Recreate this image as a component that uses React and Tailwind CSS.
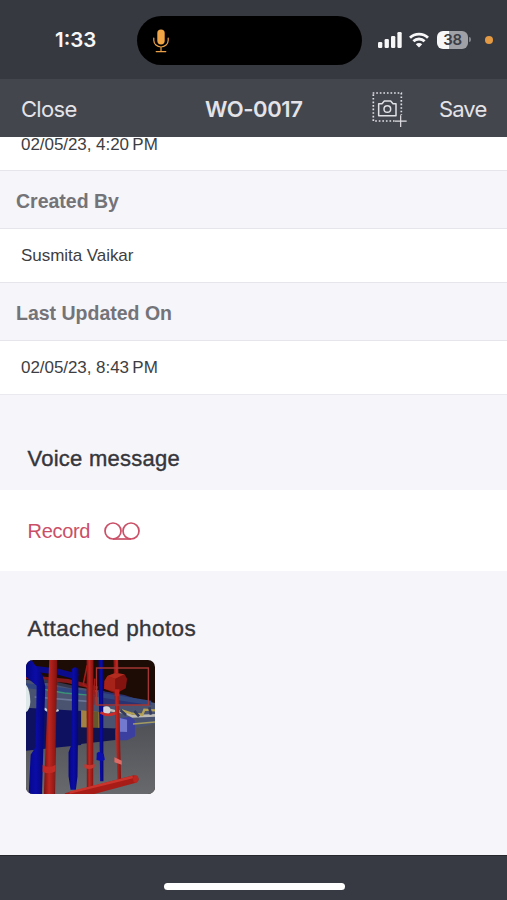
const CreatedOn = '02/05/23, 4:20\u2009PM';
const UpdatedOn = '02/05/23, 8:43\u2009PM';

function MicIcon() {
  return (
    <svg className="ml-4 h-6 w-4" viewBox="0 0 16 24" fill="none" stroke="#e9a048" strokeWidth="1.2" strokeLinecap="round">
      <rect x="4.3" y="0.4" width="7.4" height="15" rx="3.7" fill="#f2a544" stroke="none" />
      <path d="M0.8 9v2.2a7.2 6.8 0 0 0 14.4 0V9M8 18v4.4M3.2 22.6h9.6" />
    </svg>
  );
}

function SignalIcon() {
  return (
    <svg className="h-4 w-6" viewBox="0 0 24 16" fill="#f7f7f8">
      <rect x="0" y="10" width="4.3" height="6" rx="1.2" />
      <rect x="6.6" y="7" width="4.3" height="9" rx="1.2" />
      <rect x="13" y="4" width="4.3" height="12" rx="1.2" />
      <rect x="19.4" y="0" width="4.3" height="16" rx="1.2" />
    </svg>
  );
}

function WifiIcon() {
  return (
    <svg className="ml-[7px] h-4 w-5" viewBox="0 0 20 16" fill="none" stroke="#f7f7f8" strokeWidth="2.8">
      <path d="M1 5.7a13 13 0 0 1 18 0M4.4 9.3a8 8 0 0 1 11.2 0" />
      <path d="M10 15.6 6.8 12.3a4.6 4.6 0 0 1 6.4 0Z" fill="#f7f7f8" stroke="none" />
    </svg>
  );
}

function Battery() {
  return (
    <div className="ml-2 flex items-center">
      <div className="flex h-[18px] w-[31px] items-center justify-center rounded-[6px] bg-linear-to-r from-[#f7f7f8] from-38% to-[#a0a1a6] to-38% text-[15px] font-semibold leading-[18px] tracking-[-0.3px] text-[#3b3d45]">
        38
      </div>
      <div className="ml-px h-[5px] w-[2px] rounded-r-full bg-[#83858b]" />
    </div>
  );
}

function AddPhotoIcon() {
  return (
    <svg className="h-[37px] w-9" viewBox="36 210 108 111" fill="none" stroke="#e0e1e5">
      <path d="M38 216H124V282M40 220V300H104" strokeWidth="5" strokeDasharray="5 5.7" />
      <path d="M56 248H66L73 240H92L99 248H108V284H56Z" strokeWidth="4.5" strokeLinejoin="round" />
      <circle cx="82" cy="264" r="10" strokeWidth="4.5" />
      <path d="M122 283V318M105 300.500H140" strokeWidth="3.600" />
    </svg>
  );
}

function RecordIcon() {
  return (
    <svg className="ml-[14px] h-[18px] w-9" viewBox="0 0 36 18" fill="none" stroke="#ca5067" strokeWidth="1.700">
      <circle cx="9" cy="9" r="8" />
      <circle cx="27" cy="9" r="8" />
      <path d="M9 17H27" />
    </svg>
  );
}

// Thumbnail of the piping model, with the selection frame in the upper right
function PipesPhoto() {
  return (
    <svg className="mt-[17px] ml-[26px] h-[134px] w-[129px] rounded-[7px]" viewBox="34 31 388 402" preserveAspectRatio="none">
      <defs>
        <linearGradient id="red" x1="0" x2="1">
          <stop offset="0" stopColor="#7c1110" />
          <stop offset="0.4" stopColor="#bd2620" />
          <stop offset="1" stopColor="#82120f" />
        </linearGradient>
        <linearGradient id="blue" x1="0" x2="1">
          <stop offset="0" stopColor="#05067f" />
          <stop offset="0.5" stopColor="#0a0ca8" />
          <stop offset="1" stopColor="#05066b" />
        </linearGradient>
        <linearGradient id="floor" x1="0" y1="0" x2="0" y2="1">
          <stop offset="0" stopColor="#505157" />
          <stop offset="1" stopColor="#68696c" />
        </linearGradient>
      </defs>
      <rect x="34" y="31" width="388" height="402" fill="#1d0c06" />
      <path d="M34 90 250 122 422 160V270H34Z" fill="#4a5470" />
      <path d="M250 122 330 136 415 164 260 170Z" fill="#2a3272" />
      <path d="M34 300 160 285 422 222V433H34Z" fill="url(#floor)" />
      <path d="M34 108 250 135 410 160" stroke="#31457e" strokeWidth="14" fill="none" />
      <path d="M70 116 150 130 240 138" stroke="#3c9277" strokeWidth="4" fill="none" />
      <path d="M60 142 230 156" stroke="#6c7798" strokeWidth="5" fill="none" />
      <path d="M34 82 160 94 250 116" stroke="#84191a" strokeWidth="12" fill="none" />
      <path d="M34 54 130 66 190 82" stroke="#0a0c8d" strokeWidth="18" fill="none" />
      <path d="M82 92 190 116" stroke="#34364b" strokeWidth="9" />
      <path d="M34 174 200 184V286L34 303Z" fill="#0e1160" />
      <path d="M200 182 260 188V242H200Z" fill="#a28244" />
      <path d="M236 185 252 187V238H236Z" fill="#65582e" />
      <path d="M192 233 335 237V267L192 284Z" fill="#10134e" />
      <path d="M320 205 350 201 362 213V260L338 272H302V240Z" fill="#3b3f9f" />
      <path d="M316 205 338 210V247L316 246Z" fill="#7379ce" />
      <path d="M34 105Q46 120 47 156Q46 180 34 187Z" fill="#dfe8e8" />
      <path d="M88 176Q108 193 132 181" stroke="#c9d2d7" strokeWidth="7" fill="none" />
      <path d="M265 176 300 184 330 188 355 200 422 197" stroke="#bdbab4" strokeWidth="8" fill="none" />
      <path d="M322 182 350 191 384 195 390 180 422 182" stroke="#b5a154" strokeWidth="7" fill="none" />
      <path d="M356 223 422 217" stroke="#a39a62" strokeWidth="5" />
      <path d="M318 182 335 196M360 184 374 200M405 173 410 195" stroke="#343b5c" strokeWidth="8" />
      <circle cx="276" cy="182" r="12" fill="#d3d5d9" />
      <path d="M34 31H50L84 77 92 110 82 433H42L48 315 63 292 66 108 34 81Z" fill="url(#blue)" />
      <path d="M172 58Q182 48 192 58L190 290 189 380 184 420H168L162 380V308L172 280Z" fill="url(#blue)" />
      <path d="M252 31H266L267 395H257Z" fill="url(#blue)" />
      <path d="M247 310 253 306 268 313 271 330 263 335 246 331Z" fill="#0b0daf" />
      <path d="M118 31H126L120 433" stroke="#72100f" strokeWidth="3" fill="none" />
      <path d="M104 31H127L119 433H88L90 365Z" fill="url(#red)" />
      <path d="M84 345Q102 358 123 345V365Q104 376 84 366Z" fill="#c22a23" />
      <path d="M216 31H237L236 420H217Z" fill="url(#red)" />
      <path d="M210 343Q226 350 240 343V353Q226 363 210 354Z" fill="#c9342c" />
      <path d="M218 47 206 105 219 112M241 87 237 165" stroke="#a11b17" strokeWidth="5" fill="none" />
      <path d="M297 31H311L320 390H309Z" fill="url(#red)" />
      <path d="M279 79 302 70 330 74 338 87 334 116 304 132 269 117 270 94Z" fill="#84130f" />
      <path d="M279 79 302 87V126L269 117 270 94Z" fill="#a6231a" />
      <path d="M279 79 302 70 330 74 302 87Z" fill="#b22c20" />
      <path d="M301 119H315V139H301Z" fill="#bf221c" />
      <path d="M300 323 322 333V345L300 338Z" fill="#dd6b65" />
      <path d="M258 188Q280 202 303 190" stroke="#c92c2b" strokeWidth="8" fill="none" />
      <path d="M151 431 358 377Q372 378 373 391L365 399 239 433H151Z" fill="#a81c17" />
      <path d="M165 429 355 382" stroke="#cb342c" strokeWidth="7" />
      <ellipse cx="364" cy="388" rx="8" ry="11" fill="#bb2720" />
      <path d="M246 55H402V166H246Z" stroke="#a33633" strokeWidth="4" fill="none" />
    </svg>
  );
}

function FieldLabel({ children }) {
  return (
    <div className="flex h-[59px] items-center border-y border-[#e5e5eb] bg-[#f5f5fa] px-4 pt-1 text-[19.5px] font-bold text-[#737378]">
      {children}
    </div>
  );
}

function FieldValue({ children }) {
  return <div className="flex h-[53px] items-center px-[21px] pt-px text-[17px] tracking-[-0.05px] text-[#3e3e42]">{children}</div>;
}

export default function App() {
  return (
    <div className="flex h-[900px] w-[507px] flex-col overflow-hidden bg-[#f5f5fa] font-['Liberation_Sans',Arial,sans-serif]">
      <div className="flex h-[79px] shrink-0 items-center bg-[#373941] font-[Inter,sans-serif]">
        <div className="w-[137px] pt-[2px] pl-[55px] text-[20.5px] font-semibold text-[#f7f7f8]">1:33</div>
        <div className="mt-[2px] flex h-[49px] w-[225px] items-center rounded-full bg-black">
          <MicIcon />
        </div>
        <div className="ml-4 flex items-center">
          <SignalIcon />
          <WifiIcon />
          <Battery />
        </div>
        <div className="ml-[14px] size-2 rounded-full bg-[#e49a43]" />
      </div>

      <div className="flex h-[58px] shrink-0 items-center bg-[#44464e] pt-[2px] font-[Inter,sans-serif] text-[22px] text-[#e3e3e8]">
        <div className="w-[205px] pl-[21px] tracking-[-0.7px]">Close</div>
        <div className="w-[167px] font-semibold tracking-[-0.4px]">WO-0017</div>
        <AddPhotoIcon />
        <div className="ml-[31px] tracking-[-0.9px]">Save</div>
      </div>

      <div className="bg-white">
        <div className="h-[33px] px-[21px] text-[17px] leading-[15px] tracking-[-0.05px] text-[#3e3e42]">{CreatedOn}</div>
        <FieldLabel>Created By</FieldLabel>
        <FieldValue>Susmita Vaikar</FieldValue>
        <FieldLabel>Last Updated On</FieldLabel>
        <FieldValue>{UpdatedOn}</FieldValue>
      </div>

      <div className="h-24 shrink-0 border-t border-[#e9e9ef] px-[27.5px] pt-[50px] text-[22px] leading-[28px] tracking-[0.25px] text-[#36363b] [-webkit-text-stroke:0.4px_#36363b]">
        Voice message
      </div>
      <div className="flex h-[81px] shrink-0 items-center bg-white px-[27.5px]">
        <span className="text-[20px] tracking-[-0.3px] text-[#ca5067]">Record</span>
        <RecordIcon />
      </div>

      <div className="grow">
        <h2 className="px-[27.5px] pt-11 text-[22.5px] leading-[28px] tracking-[0.4px] text-[#36363b] [-webkit-text-stroke:0.4px_#36363b]">
          Attached photos
        </h2>
        <PipesPhoto />
      </div>

      <div className="flex h-[45px] shrink-0 justify-center border-t border-[#25272d] bg-[#373a42] pt-[27px] pr-[2px] pl-[3px]">
        <div className="h-[7px] w-[181px] rounded-full bg-white" />
      </div>
    </div>
  );
}
